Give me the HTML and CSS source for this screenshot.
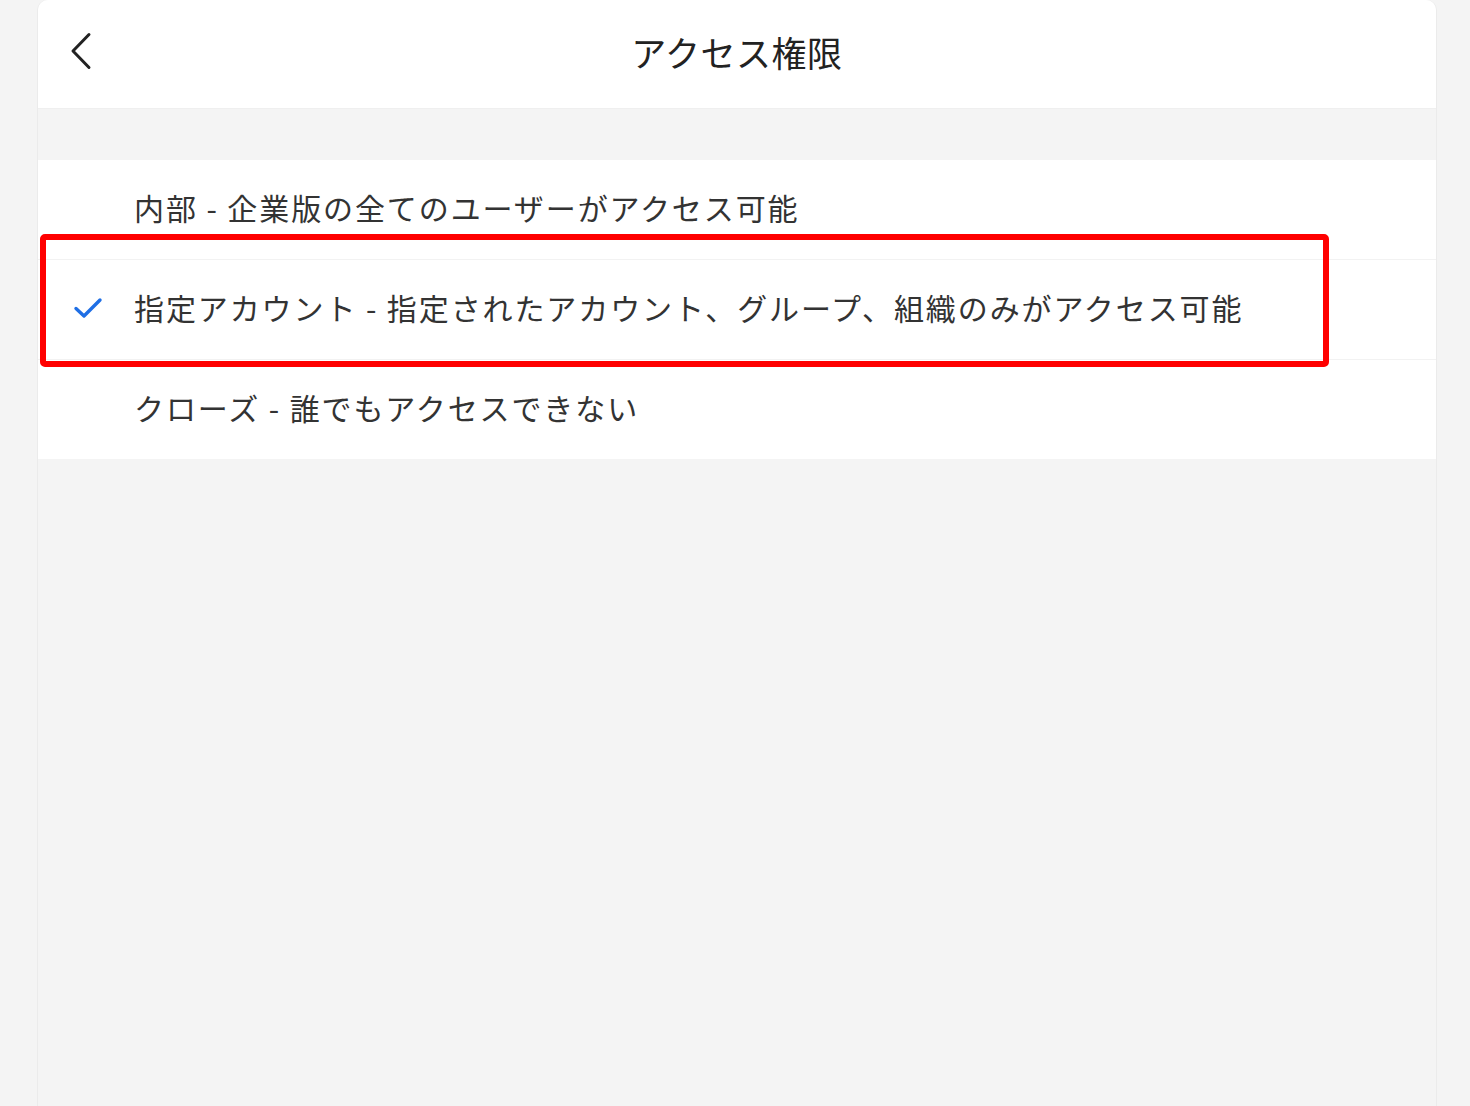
FILE: index.html
```html
<!DOCTYPE html>
<html lang="ja">
<head>
  <meta charset="UTF-8">
  <title>アクセス権限</title>
  <link rel="stylesheet" href="styles.css">
</head>
<body>
  <div class="panel">
    <!-- ヘッダー -->
    <header class="header">
      <button class="back" aria-label="戻る">
        <svg viewBox="0 0 22 38" width="22" height="38">
          <path d="M19 2.5 L3 19 L19 35.5" fill="none" stroke="#222" stroke-width="3" stroke-linecap="round" stroke-linejoin="round" />
        </svg>
      </button>
      <h1 class="title">アクセス権限</h1>
    </header>

    <!-- 権限リスト -->
    <ul class="options">
      <li class="option">
        <span class="check"></span>
        <span class="label">内部 - 企業版の全てのユーザーがアクセス可能</span>
      </li>
      <li class="option selected">
        <span class="check">
          <svg viewBox="0 0 30 24" width="30" height="24">
            <path d="M3 12.5 L11 20 L27 4" fill="none" stroke="#1f6fe5" stroke-width="3.4" stroke-linecap="round" stroke-linejoin="round" />
          </svg>
        </span>
        <span class="label">指定アカウント - 指定されたアカウント、グループ、組織のみがアクセス可能</span>
      </li>
      <li class="option">
        <span class="check"></span>
        <span class="label">クローズ - 誰でもアクセスできない</span>
      </li>
    </ul>
  </div>

  <!-- 注釈の赤枠 -->
  <div class="highlight"></div>
</body>
</html>
```

FILE: styles.css
```css
/* ページ全体 */
html, body { margin: 0; padding: 0; height: 100%; background: #f4f4f4; overflow: hidden; }
body { font-family: "Noto Sans CJK JP", "Noto Sans", sans-serif; color: #333; }

/* 中央パネル */
.panel { margin-left: 37px; width: 1398px; min-height: 100vh; border-left: 1px solid #ebebeb; border-right: 1px solid #ebebeb; border-radius: 10px 10px 0 0; background: #f4f4f4; }

/* ヘッダー */
.header { position: relative; height: 108px; display: flex; align-items: center; justify-content: center; background: #fff; border-bottom: 1px solid #efefef; border-radius: 10px 10px 0 0; }
.back { position: absolute; left: 32px; top: 32px; padding: 0; border: 0; background: none; line-height: 0; }
.title { margin: -6px 0 0; font-size: 35px; font-weight: 400; color: #222; letter-spacing: 0.5px; }

/* リスト */
.options { list-style: none; margin: 51px 0 0; padding: 0; background: #fff; }
.option { display: flex; align-items: center; height: 99px; border-bottom: 1px solid #f2f2f2; }
.option:last-child { border-bottom: 0; }
.check { width: 96px; display: flex; justify-content: center; margin-top: -4px; }
.check svg { margin-left: 4px; }
.label { margin-top: -6px; font-size: 30px; letter-spacing: 1.9px; color: #333; }

/* 赤枠 */
.highlight { position: absolute; left: 40px; top: 234px; width: 1277px; height: 121px; border: 6px solid #f00; border-radius: 5px; }
```
